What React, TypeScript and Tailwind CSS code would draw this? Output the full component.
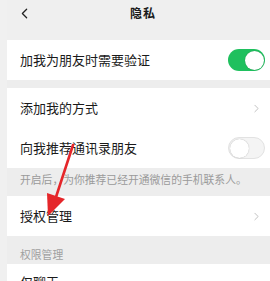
import { ChevronLeft, ChevronRight } from 'lucide-react';

const font = { fontFamily: '"Noto Sans CJK SC", "Noto Sans", sans-serif' };

function Toggle({ on }: { on: boolean }) {
  return (
    <span
      className={`flex h-[22px] w-[37px] items-center rounded-full p-[1px] ${
        on ? 'justify-end bg-[#1fc05e]' : 'justify-start border border-[#e2e2e2] bg-[#f4f4f4]'
      }`}
    >
      <span className="h-[19px] w-[19px] rounded-full bg-white shadow-[0_0_1px_rgba(0,0,0,0.35)]" />
    </span>
  );
}

function Row({ label, right }: { label: string; right?: 'on' | 'off' | 'chevron' }) {
  return (
    <div className="flex h-[40px] items-center justify-between bg-white pl-[13px] pr-[5px]">
      <span className="text-[13px] text-[#1a1a1a]">{label}</span>
      {right === 'chevron' ? (
        <ChevronRight size={13} strokeWidth={1.6} className="mr-[2px] text-[#b8b8b8]" />
      ) : right ? (
        <Toggle on={right === 'on'} />
      ) : null}
    </div>
  );
}

export default function App() {
  return (
    <div className="relative h-[281px] w-[270px] overflow-hidden bg-[#ededed]" style={font}>
      <header className="relative flex h-[40px] items-start bg-[#efefef] pt-[5px]">
        <ChevronLeft size={17} strokeWidth={1.8} className="ml-[16px] text-[#222]" />
        <span className="absolute left-[130px] top-[4px] text-[12px] font-bold tracking-[1px] text-[#1a1a1a]">隐私</span>
      </header>

      <div className="ml-[7px] flex flex-col">
        <Row label="加我为朋友时需要验证" right="on" />
        <div className="h-[8px]" />
        <Row label="添加我的方式" right="chevron" />
        <Row label="向我推荐通讯录朋友" right="off" />
        <div className="h-[28px] pl-[13px] pt-[2px] text-[10.8px] leading-[18px] text-[#9a9a9a]">
          开启后，为你推荐已经开通微信的手机联系人。
        </div>
        <Row label="授权管理" right="chevron" />
        <div className="flex h-[28px] items-end pb-[2px] pl-[13px] text-[10.8px] text-[#a0a0a0]">权限管理</div>
        <div className="flex h-[40px] items-start bg-white pl-[13px] pt-[8px]">
          <span className="text-[13px] text-[#1a1a1a]">仅聊天</span>
        </div>
      </div>

      <div className="absolute left-0 top-0 h-full w-[7px] bg-[#f0f0f0]" />

      <svg className="absolute left-0 top-0" width="270" height="281" viewBox="0 0 270 281">
        <line x1="73" y1="145" x2="56" y2="197" stroke="#e5262a" strokeWidth="2.6" strokeLinecap="round" />
        <polygon points="47,193 65,199 48,216" fill="#e5262a" />
      </svg>
    </div>
  );
}
